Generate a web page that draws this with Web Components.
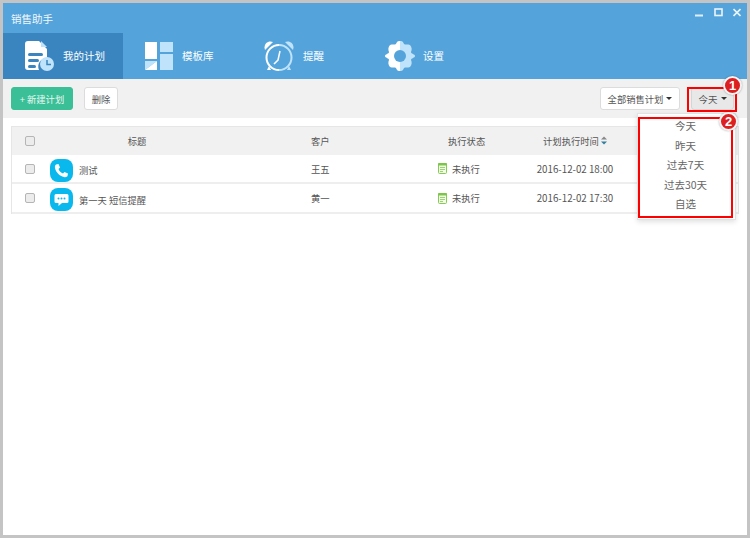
<!DOCTYPE html>
<html lang="zh"><head><meta charset="utf-8"><style>
html,body{margin:0;padding:0;width:750px;height:538px;overflow:hidden;background:#fff}
body{font:10px "Noto Sans CJK SC","Liberation Sans",sans-serif;color:#555}
</style></head><body>
<sales-app>
  <title-bar slot="top">销售助手</title-bar>
  <nav-bar slot="top">
    <nav-tab active label="我的计划" icon="plan"></nav-tab>
    <nav-tab label="模板库" icon="tpl"></nav-tab>
    <nav-tab label="提醒" icon="clock"></nav-tab>
    <nav-tab label="设置" icon="gear"></nav-tab>
  </nav-bar>
  <tool-bar></tool-bar>
  <plan-table></plan-table>
</sales-app>
<script>
function def(name,html){customElements.define(name,class extends HTMLElement{
  constructor(){super();this.attachShadow({mode:'open'});}
  connectedCallback(){this.shadowRoot.innerHTML=typeof html==='function'?html(this):html;}
});}
const ICONS={
plan:`<svg width="29" height="30" viewBox="0 0 29 30"><path d="M3 0H14L22 8V17A8.500 8.500 0 0 0 14 29H3Q0 29 0 26V3Q0 0 3 0Z" fill="#fff"/><path d="M16 0L22 6H16Z" fill="#bfe3fb"/><rect x="3" y="12" width="15" height="3" rx="1.500" fill="#3a85bf"/><rect x="3" y="18" width="11" height="3" rx="1.500" fill="#3a85bf"/><rect x="3" y="24" width="8" height="3" rx="1.500" fill="#3a85bf"/><circle cx="22" cy="23" r="7" fill="#bfe3fb"/><path d="M22 19V23.500H26" stroke="#3a85bf" stroke-width="1.500" fill="none"/></svg>`,
tpl:`<svg width="28" height="28" viewBox="0 0 28 28"><rect width="12" height="17" fill="#fff"/><rect x="15" width="13" height="10" fill="#bfe3fb"/><path d="M0 19H12L0 28Z" fill="#bfe3fb"/><path d="M12 19V28H0Z" fill="#fff"/><rect x="15" y="12" width="13" height="16" fill="#bfe3fb"/></svg>`,
clock:`<svg width="30" height="30" viewBox="0 0 30 30"><path d="M1 9C-1 3 4-1 9 1Z" fill="#fff"/><path d="M21 1C26-1 31 3 29 9Z" fill="#bfe3fb"/><path d="M15 4A12.500 12.500 0 0 0 15 29" fill="none" stroke="#fff" stroke-width="2"/><path d="M15 4A12.500 12.500 0 0 1 15 29" fill="none" stroke="#bfe3fb" stroke-width="2"/><path d="M16 10L14 19L10 23" fill="none" stroke="#fff" stroke-width="1.500"/><path d="M5 25L3 29H7Z" fill="#fff"/><path d="M25 25L27 29H23Z" fill="#bfe3fb"/></svg>`,
gear:`<svg width="32" height="30" viewBox="0 0 32 30"><path d="M16 0C19 0 19 1 20 3C21 4 24 3 26 4C28 6 28 9 27 11C27 13 31 13 31 15C31 17 27 17 27 19C28 21 28 24 26 26C24 27 21 26 20 27C19 29 19 30 16 30Z" fill="#bfe3fb"/><path d="M16 0C13 0 13 1 12 3C11 4 8 3 6 4C4 6 4 9 5 11C5 13 1 13 1 15C1 17 5 17 5 19C4 21 4 24 6 26C8 27 11 26 12 27C13 29 13 30 16 30Z" fill="#fff"/><circle cx="16" cy="15" r="6" fill="#54a4db"/></svg>`};
def('sales-app',`<style>:host{display:flex;flex-direction:column;box-sizing:border-box;width:750px;height:538px;border:3px solid #c4c4c4;position:relative;background:#fff}</style><slot name="top"></slot><slot></slot>`);
def('title-bar',`<style>:host{display:flex;align-items:center;justify-content:space-between;height:30px;background:#54a4db;color:#f2f8fc;padding:0 6px 0 8px;font-size:10.500px}
.w{display:flex;gap:10px;align-items:center;margin-bottom:12px}svg{display:block}</style><span><slot></slot></span>
<span class="w"><svg width="9" height="9"><rect x="0" y="6.500" width="8" height="2" fill="#dfeffa"/></svg><svg width="9" height="9"><rect x="1" y="1" width="7" height="6.500" fill="none" stroke="#eaf4fb" stroke-width="1.600"/></svg><svg width="8" height="9"><path d="M.5 1L7.500 8M7.500 1L.5 8" stroke="#eaf4fb" stroke-width="1.700"/></svg></span>`);
def('nav-bar',`<style>:host{display:flex;height:46px;background:#54a4db}</style><slot></slot>`);
def('nav-tab',t=>`<style>:host{display:flex;align-items:center;box-sizing:border-box;height:46px;width:120px;padding-left:22px;gap:9px;color:#fff;font-size:10.500px}
:host([active]){background:#3a85bf}
:host(:nth-child(2)){padding-left:22px}
:host(:nth-child(3)){padding-left:21px}
:host(:nth-child(4)){padding-left:21px;gap:7px}
svg{display:block}span{position:relative;top:-1px}</style>${ICONS[t.getAttribute('icon')]}<span>${t.getAttribute('label')}</span>`);
def('ui-btn',`<style>:host{display:inline-flex;align-items:center;justify-content:center;box-sizing:border-box;height:23px;padding:0 8px;border:1px solid #dcdcdc;border-radius:3px;background:#fff;color:#555;font-size:9.300px;white-space:nowrap}
:host([primary]){background:#3bbf97;border-color:#3bbf97;color:#e8f8f3;width:62px}
:host([pressed]){background:#e8e8e8;border-color:#d5d5d5;font-size:9.500px}</style><slot></slot>`);
def('ui-caret',`<style>:host{display:inline-block;width:0;height:0;border:3px solid transparent;border-top:3.500px solid #333;border-bottom:0;margin-left:3px}</style>`);
def('tool-bar',`<style>:host{display:flex;align-items:center;box-sizing:border-box;height:39px;background:#f1f1f1;padding:0 13px 0 8px;gap:11px;position:relative}
.sp{flex:1}
.mark{position:absolute;box-sizing:border-box;border:2px solid #f00;z-index:5}
.m1{left:684px;top:8px;width:50px;height:25px}
.m2{left:635px;top:38px;width:95px;height:101px;background:#fff;display:flex;flex-direction:column;align-items:center;justify-content:flex-start;color:#666;font-size:10.500px;line-height:19.600px}
.m2 span:first-child{margin-top:-3px}
.shadow{position:absolute;left:634px;top:34px;width:99px;height:107px;background:#fff;border:1px solid #e2e2e2;box-sizing:border-box;box-shadow:0 2px 5px rgba(0,0,0,.12);z-index:4}
.num{position:absolute;width:19px;height:19px;border-radius:50%;background:#dd1f1f;border:2px solid #f3f3f3;box-sizing:border-box;color:#fff;font:bold 13px/15px "Liberation Sans",sans-serif;text-align:center;z-index:6;box-shadow:0 0 2px rgba(0,0,0,.35)}
</style>
<ui-btn primary>+ 新建计划</ui-btn><ui-btn style="width:34px;padding:0">删除</ui-btn><span class="sp"></span>
<ui-btn style="width:80px;padding:0">全部销售计划<ui-caret></ui-caret></ui-btn>
<ui-btn pressed style="width:43px;padding:0">今天<ui-caret></ui-caret></ui-btn>
<div class="shadow"></div>
<div class="mark m1"></div>
<div class="mark m2"><span>今天</span><span>昨天</span><span>过去7天</span><span>过去30天</span><span>自选</span></div>
<span class="num" style="left:720px;top:-3px">1</span>
<span class="num" style="left:716px;top:33px">2</span>`);
def('ui-check',`<style>:host{display:block;box-sizing:border-box;width:10px;height:10px;margin:0 auto;border:1px solid #b5b5b5;border-radius:2px;background:#ececec}</style>`);
def('plan-table',`<style>:host{display:block;margin:8px 8px 0 8px;width:728px;font-size:9.300px;color:#555;border:1px solid #e6e6e6;border-bottom:0;box-sizing:border-box}
.r{display:grid;grid-template-columns:36px 263px 127px 82px 110px 108px;height:29px;align-items:center;border-bottom:2px solid #eee;box-sizing:border-box}
.h{background:#f1f1f1;border-bottom:0;height:28px}
.c{text-align:center}
.t{display:flex;align-items:center;gap:6px;padding-left:2px;margin-top:3px}
.ico{width:23px;height:23px;border-radius:8px;background:#09b8ec;display:flex;align-items:center;justify-content:center;flex:none}
.s{display:flex;align-items:center;gap:5px}
.tm{font-size:9.750px;text-align:center}
</style>
<div class="r h"><span class="c"><ui-check></ui-check></span><span class="c" style="padding-right:85px">标题</span><span>客户</span><span style="padding-left:10px">执行状态</span><span class="c">计划执行时间 <svg width="6" height="9" viewBox="0 0 6 9"><path d="M0 3.500L3 .5L6 3.500Z" fill="#888"/><path d="M0 5.500L3 8.500L6 5.500Z" fill="#2f7f9f"/></svg></span><span></span></div>
<div class="r"><span class="c"><ui-check></ui-check></span><span class="t"><span class="ico"><svg width="15" height="15" viewBox="0 0 15 15"><path d="M2 1.500L4.500 1L6 4.500L4.500 6C5.200 8 7 9.800 9 10.500L10.500 9L14 10.500L13.500 13C13 14 11.500 14.500 10 14C5.500 13 2 9.500 1 5C.7 3.500 1 2.200 2 1.500Z" fill="#fff"/></svg></span>测试</span><span>王五</span><span class="s"><status-ico></status-ico>未执行</span><span class="tm">2016-12-02 18:00</span><span></span></div>
<div class="r" style="height:30px"><span class="c"><ui-check></ui-check></span><span class="t"><span class="ico"><svg width="15" height="14" viewBox="0 0 15 14"><path d="M2 1H13Q14.500 1 14.500 2.500V8.500Q14.500 10 13 10H8L4.500 13V10H2Q.5 10 .5 8.500V2.500Q.5 1 2 1Z" fill="#fff"/><circle cx="4.500" cy="5.500" r="1" fill="#09b8ec"/><circle cx="7.500" cy="5.500" r="1" fill="#09b8ec"/><circle cx="10.500" cy="5.500" r="1" fill="#09b8ec"/></svg></span>第一天 短信提醒</span><span>黄一</span><span class="s"><status-ico></status-ico>未执行</span><span class="tm">2016-12-02 17:30</span><span></span></div>`);
def('status-ico',`<style>:host{display:inline-flex}svg{display:block}</style><svg width="9" height="11" viewBox="0 0 9 11"><rect x=".5" y=".5" width="8" height="10" rx="1" fill="#f3fbe9" stroke="#84cc52"/><rect x="0" y="0" width="9" height="2.500" rx="1" fill="#7cc54a"/><path d="M2 4.500H7M2 6.500H7M2 8.500H5" stroke="#84cc52" stroke-width=".8"/></svg>`);
</script></body></html>
